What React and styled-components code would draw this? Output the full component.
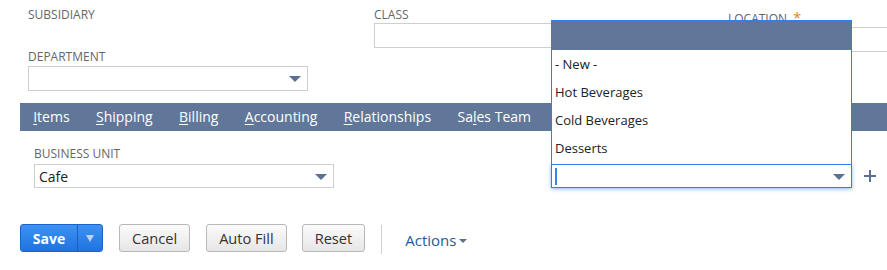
import { createGlobalStyle, styled } from "styled-components";

const GlobalStyle = createGlobalStyle`
  html, body {
    margin: 0;
    padding: 0;
    background: #fff;
  }
  body {
    font-family: "Open Sans", "Liberation Sans", sans-serif;
    color: #333;
  }
`;

const Page = styled.div`
  width: 887px;
  height: 270px;
  overflow: hidden;
`;

const TopFields = styled.div`
  display: flex;
  padding-left: 28px;
  padding-top: 7px;
`;

const Column = styled.div`
  display: flex;
  flex-direction: column;
  width: ${(p) => p.$width || "auto"};
  flex: ${(p) => (p.$width ? "none" : "1")};
  padding-top: ${(p) => p.$offset || 0}px;
`;

const Label = styled.div`
  font-size: 12px;
  line-height: 16px;
  color: #666;
  text-transform: uppercase;
  white-space: nowrap;
  margin-bottom: ${(p) => p.$gap || 0}px;
`;

const Required = styled.span`
  color: #d9892a;
  font-size: 15px;
  margin-left: 6px;
`;

const Spacer = styled.div`
  height: ${(p) => p.$h}px;
`;

const Input = styled.div`
  box-sizing: border-box;
  width: ${(p) => p.$width}px;
  height: ${(p) => p.$height || 25}px;
  border: 1px solid #cfcfcf;
  background: #fff;
  display: flex;
  align-items: center;
  padding: 0 6px 0 4px;
  font-size: 14px;
  color: #222;
`;

const Select = styled(Input)`
  justify-content: space-between;
`;

const Arrow = styled.span`
  width: 0;
  height: 0;
  border-left: 6px solid transparent;
  border-right: 6px solid transparent;
  border-top: 6px solid #5c7191;
  margin-top: 1px;
`;

const TabBar = styled.div`
  margin: 12px 0 0 20px;
  height: 28px;
  background: #607799;
  display: flex;
  align-items: center;
`;

const Tab = styled.div`
  color: #fff;
  font-size: 14px;
  padding: 0 13.2px;
  white-space: nowrap;
  line-height: 28px;

  u {
    text-underline-offset: 2px;
  }
`;

const TabContent = styled.div`
  display: flex;
  padding: 15px 0 0 34px;
`;

const FocusWrap = styled.div`
  position: relative;
  display: flex;
  align-items: center;
  margin-top: 18px;
`;

const FocusSelect = styled(Select)`
  border: 1px solid #2f80e6;
  box-shadow: 0 1px 4px rgba(47, 128, 230, 0.55);
  padding-left: 3px;
`;

const Caret = styled.span`
  width: 2px;
  height: 17px;
  background: #3a86ee;
`;

const Menu = styled.div`
  position: absolute;
  left: 0;
  bottom: 24px;
  box-sizing: border-box;
  width: 301px;
  border: 1px solid #2f80e6;
  border-bottom: none;
  background: #fff;
  padding-bottom: 2px;
`;

const MenuHeader = styled.div`
  height: 29px;
  background: #607799;
`;

const Option = styled.div`
  box-sizing: border-box;
  height: 28px;
  padding: 1px 0 0 3px;
  line-height: 27px;
  font-size: 13px;
  color: #222;
`;

const AddButton = styled.svg`
  margin-left: 11px;
`;

const ButtonRow = styled.div`
  display: flex;
  align-items: flex-start;
  padding: 36px 0 0 20px;
`;

const SplitButton = styled.div`
  display: flex;
  box-sizing: border-box;
  height: 28px;
  border: 1px solid #1c63c9;
  border-radius: 3px;
  background: linear-gradient(#3d92f4, #1f73df);
  color: #fff;
  overflow: hidden;
`;

const SplitMain = styled.div`
  width: 56px;
  font-size: 14px;
  font-weight: bold;
  display: flex;
  align-items: center;
  justify-content: center;
  border-right: 1px solid #1c5fbf;
`;

const SplitArrow = styled.div`
  width: 24px;
  display: flex;
  align-items: center;
  justify-content: center;

  &::after {
    content: "";
    border-left: 4px solid transparent;
    border-right: 4px solid transparent;
    border-top: 7px solid #bcd3f2;
  }
`;

const Button = styled.div`
  box-sizing: border-box;
  height: 28px;
  margin-left: ${(p) => p.$gap || 16}px;
  padding: 0 12px;
  border: 1px solid #b8b8b8;
  border-radius: 3px;
  background: linear-gradient(#fbfbfb, #e6e6e6);
  font-size: 14.6px;
  color: #333;
  display: flex;
  align-items: center;
  white-space: nowrap;
`;

const Divider = styled.div`
  width: 1px;
  height: 29px;
  background: #cfcfcf;
  margin: 1px 23px 0 16px;
`;

const Actions = styled.div`
  font-size: 15px;
  line-height: 20px;
  color: #255a9c;
  display: flex;
  align-items: center;
  margin-top: 6px;
`;

const SmallArrow = styled.span`
  width: 0;
  height: 0;
  border-left: 4px solid transparent;
  border-right: 4px solid transparent;
  border-top: 4px solid #5c7191;
  margin: 2px 0 0 3px;
`;

const tabs = [
  { key: "I", rest: "tems" },
  { key: "S", rest: "hipping" },
  { key: "B", rest: "illing" },
  { key: "A", rest: "ccounting" },
  { key: "R", rest: "elationships" },
  { pre: "Sa", key: "l", rest: "es Team" },
];

const options = ["- New -", "Hot Beverages", "Cold Beverages", "Desserts"];

export default function App() {
  return (
    <Page>
      <GlobalStyle />
      <TopFields>
        <Column $width="346px">
          <Label>Subsidiary</Label>
          <Spacer $h={26} />
          <Label $gap={1}>Department</Label>
          <Select $width={280}>
            <span />
            <Arrow />
          </Select>
        </Column>
        <Column $width="354px">
          <Label>Class</Label>
          <Input $width={300} />
        </Column>
        <Column $offset={2}>
          <Label>
            Location
            <Required>*</Required>
          </Label>
          <Input $width={300} />
        </Column>
      </TopFields>

      <TabBar>
        {tabs.map((t, i) => (
          <Tab key={i}>
            {t.pre}
            <u>{t.key}</u>
            {t.rest}
          </Tab>
        ))}
      </TabBar>

      <TabContent>
        <Column $width="517px">
          <Label $gap={2}>Business Unit</Label>
          <Select $width={300} $height={24}>
            <span>Cafe</span>
            <Arrow />
          </Select>
        </Column>
        <Column>
          <FocusWrap>
            <Menu>
              <MenuHeader />
              {options.map((o) => (
                <Option key={o}>{o}</Option>
              ))}
            </Menu>
            <FocusSelect $width={301} $height={24}>
              <Caret />
              <Arrow />
            </FocusSelect>
            <AddButton width="14" height="14" viewBox="0 0 14 14">
              <path d="M7 1v12M1 7h12" stroke="#5c7191" strokeWidth="2" />
            </AddButton>
          </FocusWrap>
        </Column>
      </TabContent>

      <ButtonRow>
        <SplitButton>
          <SplitMain>Save</SplitMain>
          <SplitArrow />
        </SplitButton>
        <Button>Cancel</Button>
        <Button>Auto Fill</Button>
        <Button $gap={15}>Reset</Button>
        <Divider />
        <Actions>
          Actions
          <SmallArrow />
        </Actions>
      </ButtonRow>
    </Page>
  );
}
